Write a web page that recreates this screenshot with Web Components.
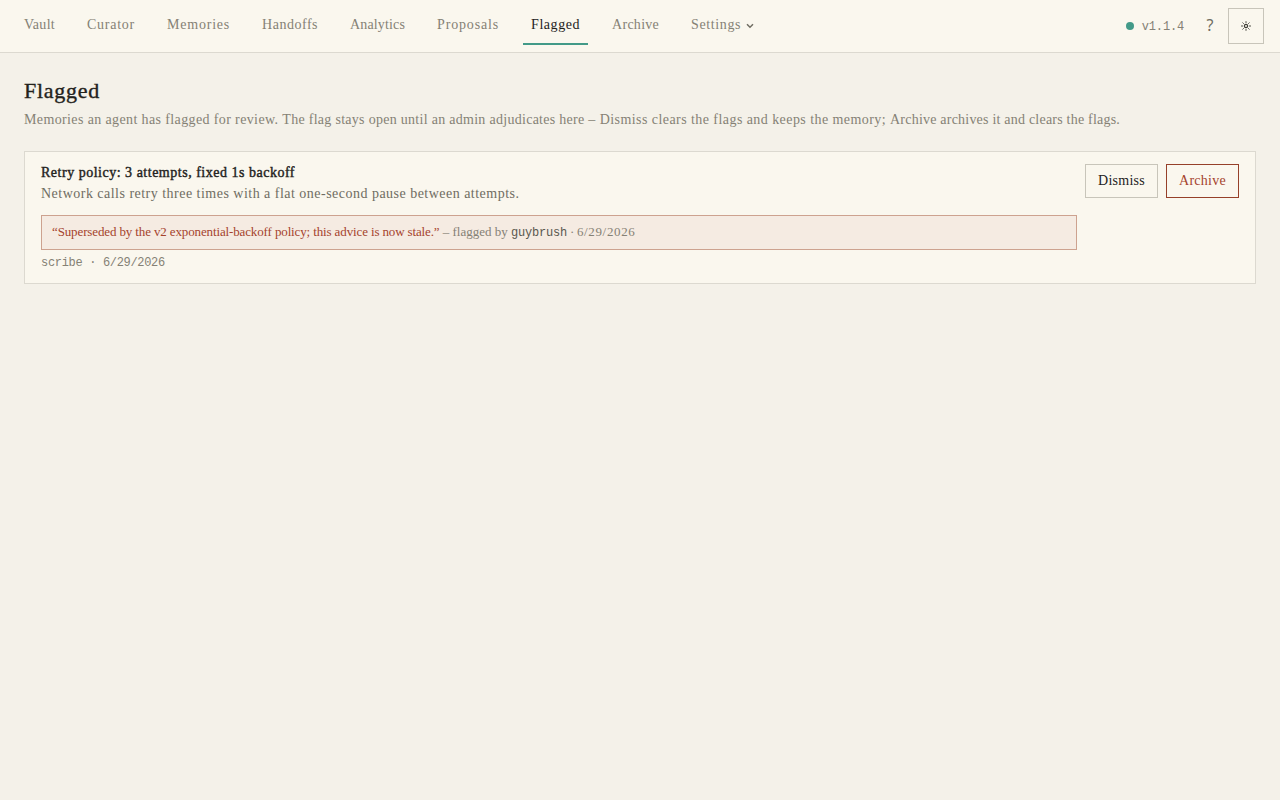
<!DOCTYPE html>
<html lang="en"><head><meta charset="utf-8"><title>Flagged</title>
<style>
:root{--ink:#23221c;--muted:#858175;--soft:#6f6d62;--line:#dcd9d0;--edge:#c8c5ba;--paper:#faf7ee;--teal:#429a88;--rust:#a5432d;--serif:"Liberation Serif",serif;--mono:"Liberation Mono",monospace}
body{margin:0;min-height:100vh;background:#f4f1e9;font-family:var(--serif);color:var(--ink)}
</style></head><body>
<top-bar>
<nav-link style="letter-spacing:.29px">Vault</nav-link>
<nav-link style="letter-spacing:.748px">Curator</nav-link>
<nav-link style="letter-spacing:.779px">Memories</nav-link>
<nav-link style="letter-spacing:.52px">Handoffs</nav-link>
<nav-link style="letter-spacing:.149px">Analytics</nav-link>
<nav-link style="letter-spacing:.839px">Proposals</nav-link>
<nav-link style="letter-spacing:.557px" active>Flagged</nav-link>
<nav-link style="letter-spacing:.273px">Archive</nav-link>
<nav-link style="letter-spacing:.61px">Settings<menu-chevron></menu-chevron></nav-link>
<server-status slot="end">v1.1.4</server-status>
<help-button slot="end">?</help-button>
<theme-toggle slot="end"></theme-toggle>
</top-bar>
<page-head>
<span slot="heading">Flagged</span>
<span style="letter-spacing:.378px">Memories an agent has flagged for review. </span><span style="letter-spacing:.285px">The flag stays open until an admin adjudicates here </span><span style="letter-spacing:.436px">– Dismiss clears the flags and keeps the memory; </span><span style="letter-spacing:.215px">Archive archives it and clears the flags.</span>
</page-head>
<flag-card>
<span slot="title">Retry policy: 3 attempts, fixed 1s backoff</span>
<span slot="body">Network calls retry three times with a flat one-second pause between attempts.</span>
<flag-reason slot="reason"><span slot="quote">“Superseded by the v2 exponential-backoff policy; this advice is now stale.”</span><span slot="who">guybrush</span><span slot="date">6/29/2026</span></flag-reason>
<span slot="meta">scribe · 6/29/2026</span>
<action-button slot="actions">Dismiss</action-button>
<action-button slot="actions" danger>Archive</action-button>
</flag-card>
<script>
function define(name, html) {
  const t = document.createElement('template');
  t.innerHTML = html;
  customElements.define(name, class extends HTMLElement {
    constructor() {
      super();
      this.attachShadow({ mode: 'open' }).append(t.content.cloneNode(true));
    }
  });
}
define('top-bar', `<style>
:host{display:flex;box-sizing:border-box;height:53px;padding:0 16px;align-items:center;background:var(--paper);border-bottom:1px solid var(--line)}
nav{display:flex;gap:16px}
.end{margin-left:auto;display:flex;align-items:center}
</style><nav><slot></slot></nav><div class="end"><slot name="end"></slot></div>`);
define('nav-link', `<style>
:host{display:flex;align-items:center;box-sizing:border-box;height:38px;font-size:14px;line-height:20px;padding:0 8px 1px;color:var(--muted);border-bottom:2px solid transparent}
:host([active]){color:var(--ink);border-bottom-color:var(--teal)}
</style><slot></slot>`);
define('menu-chevron', `<style>:host{display:flex;margin-left:5px;padding-top:2px}</style>
<svg width="8" height="6" viewBox="0 0 8 6" fill="none" stroke="#6f6d62" stroke-width="1.5"><path d="M1 1.3 4 4.3 7 1.3"/></svg>`);
define('server-status', `<style>
:host{display:flex;align-items:center;gap:8px;font:12px/20px var(--mono);letter-spacing:-.17px;color:var(--muted)}
i{width:8px;height:8px;border-radius:50%;background:var(--teal)}
span{padding-top:1px}
</style><i></i><span><slot></slot></span>`);
define('help-button', `<style>:host{display:block;width:36px;margin-left:8px;padding-bottom:2px;text-align:center;font:16px/20px "Noto Sans",sans-serif;color:var(--soft)}</style><slot></slot>`);
define('theme-toggle', `<style>
:host{display:flex;box-sizing:border-box;width:36px;height:36px;border:1px solid var(--edge);align-items:center;justify-content:center}
</style><svg width="10" height="10" viewBox="0 0 10 10" fill="none" stroke="#3f3d36"><circle cx="5" cy="5" r="1.6" stroke-width="1.2"/><path stroke-width=".9" d="M5 .2v1.9M5 7.9v1.9M0 5h2.1M7.9 5H10M1.5 1.5l1.3 1.3M7.2 7.2l1.3 1.3M8.5 1.5 7.2 2.8M2.8 7.2 1.5 8.5"/></svg>`);
define('page-head', `<style>
:host{display:block;padding:24px 24px 21px}
h1{font-size:22px;line-height:28px;font-weight:400;letter-spacing:.74px;margin:0 0 4px;-webkit-text-stroke:.35px currentColor}
p{margin:0;font-size:14px;line-height:21px;color:var(--muted);white-space:nowrap}
</style><h1><slot name="heading"></slot></h1><p><slot></slot></p>`);
define('flag-card', `<style>
:host{display:flex;box-sizing:border-box;gap:8px;margin:0 24px;padding:12px 16px 11px;background:var(--paper);border:1px solid var(--line);font-size:14px}
.main{flex:1}
.title{line-height:18px;letter-spacing:.509px;-webkit-text-stroke:.4px currentColor}
.body{line-height:21px;margin-top:1px;letter-spacing:.482px;color:var(--soft)}
.meta{margin-top:4px;font:12px/18px var(--mono);letter-spacing:-.32px;color:var(--muted)}
.actions{display:flex;gap:8px;align-items:flex-start}
</style><div class="main"><div class="title"><slot name="title"></slot></div><div class="body"><slot name="body"></slot></div><slot name="reason"></slot><div class="meta"><slot name="meta"></slot></div></div><div class="actions"><slot name="actions"></slot></div>`);
define('flag-reason', `<style>
:host{display:block;margin-top:11px;padding:0 10px;height:33px;border:1px solid #cda28f;background:#f5ebe2;font-size:13px;line-height:31px;color:var(--muted);white-space:nowrap}
.q{color:var(--rust);letter-spacing:-.128px}
.w{font-family:var(--mono);font-size:12px;letter-spacing:-.2px;color:#5a584e}
.d{letter-spacing:-.3px}
.n{letter-spacing:.64px}
</style><span class="q"><slot name="quote"></slot></span> – flagged by <span class="w"><slot name="who"></slot></span><span class="d"> · <span class="n"><slot name="date"></slot></span></span>`);
define('action-button', `<style>
:host{display:flex;box-sizing:border-box;width:73px;height:34px;justify-content:center;border:1px solid var(--edge);font-size:14px;line-height:31px;letter-spacing:.268px}
:host([danger]){color:var(--rust);border-color:#96402a}
</style><slot></slot>`);
</script></body></html>
